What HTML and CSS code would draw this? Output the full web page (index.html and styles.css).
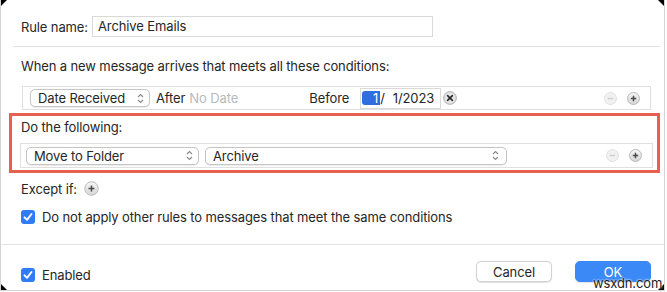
FILE: index.html
```html
<!DOCTYPE html>
<html lang="en">
<head>
    <meta charset="UTF-8">
    <title>Rule - Archive Emails</title>
    <link rel="stylesheet" href="styles.css">
</head>
<body>
    <div class="window">
        <!-- rule name -->
        <div class="name-row">
            <span class="label">Rule name:</span>
            <div class="text-field">Archive Emails</div>
        </div>
        <div class="sep"></div>

        <!-- conditions -->
        <p class="section-title">When a new message arrives that meets all these conditions:</p>
        <div class="rule-box cond-box">
            <div class="popup popup-date">
                <span>Date Received</span>
                <svg class="arrows" width="7" height="11" viewBox="0 0 7 11"><path d="M1 4 L3.5 1.5 L6 4 M1 7 L3.5 9.5 L6 7" fill="none" stroke="#8a8a8a" stroke-width="1.1"/></svg>
            </div>
            <span class="word">After</span>
            <span class="placeholder">No Date</span>
            <span class="before">Before</span>
            <div class="date-field"><span class="date-sel">1</span><span class="slash">/</span><span class="date-rest">1/2023</span></div>
            <span class="clear-btn">
                <svg width="14" height="14" viewBox="0 0 14 14"><circle cx="7" cy="7" r="6.3" fill="#e6e6e6" stroke="#a0a0a0" stroke-width="0.9"/><path d="M4.6 4.6 L9.4 9.4 M9.4 4.6 L4.6 9.4" stroke="#2b2b2b" stroke-width="1.6" stroke-linecap="round"/></svg>
            </span>
            <div class="row-btns">
                <svg width="13" height="13" viewBox="0 0 13 13"><circle cx="6.5" cy="6.5" r="6" fill="#f1f1f1" stroke="#dcdcdc" stroke-width="0.8"/><path d="M3.8 6.5 H9.2" stroke="#cfcfcf" stroke-width="1.4"/></svg>
                <svg width="13" height="13" viewBox="0 0 13 13"><defs><linearGradient id="g1" x1="0" y1="0" x2="0" y2="1"><stop offset="0" stop-color="#f6f6f6"/><stop offset="1" stop-color="#d6d6d6"/></linearGradient></defs><circle cx="6.5" cy="6.5" r="6" fill="url(#g1)" stroke="#ababab" stroke-width="0.8"/><path d="M3.8 6.5 H9.2 M6.5 3.8 V9.2" stroke="#4a4a4a" stroke-width="1.5"/></svg>
            </div>
        </div>

        <!-- actions -->
        <div class="action-frame">
            <p class="section-title">Do the following:</p>
            <div class="rule-box act-box">
                <div class="popup popup-action">
                    <span>Move to Folder</span>
                    <svg class="arrows" width="7" height="11" viewBox="0 0 7 11"><path d="M1 4 L3.5 1.5 L6 4 M1 7 L3.5 9.5 L6 7" fill="none" stroke="#8a8a8a" stroke-width="1.1"/></svg>
                </div>
                <div class="popup popup-folder">
                    <span>Archive</span>
                    <svg class="arrows" width="7" height="11" viewBox="0 0 7 11"><path d="M1 4 L3.5 1.5 L6 4 M1 7 L3.5 9.5 L6 7" fill="none" stroke="#8a8a8a" stroke-width="1.1"/></svg>
                </div>
                <div class="row-btns">
                    <svg width="13" height="13" viewBox="0 0 13 13"><circle cx="6.5" cy="6.5" r="6" fill="#f1f1f1" stroke="#dcdcdc" stroke-width="0.8"/><path d="M3.8 6.5 H9.2" stroke="#cfcfcf" stroke-width="1.4"/></svg>
                    <svg width="13" height="13" viewBox="0 0 13 13"><defs><linearGradient id="g2" x1="0" y1="0" x2="0" y2="1"><stop offset="0" stop-color="#f6f6f6"/><stop offset="1" stop-color="#d6d6d6"/></linearGradient></defs><circle cx="6.5" cy="6.5" r="6" fill="url(#g2)" stroke="#ababab" stroke-width="0.8"/><path d="M3.8 6.5 H9.2 M6.5 3.8 V9.2" stroke="#4a4a4a" stroke-width="1.5"/></svg>
                </div>
            </div>
        </div>

        <!-- exceptions -->
        <div class="except-row">
            <span>Except if:</span>
            <svg width="15" height="15" viewBox="0 0 15 15"><defs><linearGradient id="g3" x1="0" y1="0" x2="0" y2="1"><stop offset="0" stop-color="#f6f6f6"/><stop offset="1" stop-color="#d6d6d6"/></linearGradient></defs><circle cx="7.5" cy="7.5" r="6.8" fill="url(#g3)" stroke="#b0b0b0" stroke-width="0.8"/><path d="M4.5 7.5 H10.5 M7.5 4.5 V10.5" stroke="#4a4a4a" stroke-width="1.5"/></svg>
        </div>

        <div class="check-row stop-row">
            <span class="checkbox"><svg width="14" height="14" viewBox="0 0 14 14"><path d="M3.5 7.3 L6 9.8 L10.5 4" fill="none" stroke="#fff" stroke-width="1.9" stroke-linecap="round" stroke-linejoin="round"/></svg></span>
            <span>Do not apply other rules to messages that meet the same conditions</span>
        </div>

        <div class="sep full"></div>

        <div class="footer">
            <div class="check-row enabled-row">
                <span class="checkbox"><svg width="14" height="14" viewBox="0 0 14 14"><path d="M3.5 7.3 L6 9.8 L10.5 4" fill="none" stroke="#fff" stroke-width="1.9" stroke-linecap="round" stroke-linejoin="round"/></svg></span>
                <span>Enabled</span>
            </div>
            <div class="buttons">
                <button class="btn">Cancel</button>
                <button class="btn btn-ok">OK</button>
            </div>
        </div>

        <span class="corner c-tl"></span>
        <span class="corner c-tr"></span>
        <span class="corner c-bl"></span>
        <span class="corner c-br"></span>
        <span class="watermark">wsxdn.com</span>
    </div>
</body>
</html>
```

FILE: styles.css
```css
* {
    box-sizing: border-box;
}

body {
    margin: 0;
    background: #fff;
    font-family: Inter, "Liberation Sans", Arial, sans-serif;
    font-size: 13px;
    letter-spacing: -0.12px;
    color: #262626;
}

.window {
    position: relative;
    width: 665px;
    height: 291px;
    border-left: 1px solid #d4d4d4;
    border-right: 1px solid #d4d4d4;
    border-bottom: 1px solid #d4d4d4;
    overflow: hidden;
}

/* rule name */
.name-row {
    display: flex;
    align-items: center;
    height: 21px;
    margin-top: 16px;
    padding-left: 20px;
}
.label {
    width: 71px;
}
.text-field {
    width: 341px;
    height: 21px;
    border: 1px solid #d9d9d9;
    padding-left: 5px;
    line-height: 19px;
}

.sep {
    height: 1px;
    margin: 9px 4px 0 12px;
    background: #e2e2e2;
}
.sep.full {
    margin: 20px 0 0 0;
}

.section-title {
    margin: 11px 0 0 20px;
    line-height: 16px;
}

/* rule rows */
.rule-box {
    display: flex;
    align-items: center;
    border: 1px solid #e0e0e0;
    padding-right: 10px;
}
.cond-box {
    height: 24px;
    margin: 12px 13px 0 21px;
    padding-left: 7px;
}
.act-box {
    height: 25px;
    margin: 8px 4px 2px 8px;
    padding-left: 5px;
}

.popup {
    display: flex;
    align-items: center;
    justify-content: space-between;
    height: 18px;
    padding: 0 5px 0 7px;
    border: 1px solid #c6c6c6;
    border-radius: 5px;
    background: #fff;
    box-shadow: 0 0.5px 1px rgba(0, 0, 0, 0.08);
}
.popup-date {
    width: 120px;
}
.popup-action {
    width: 173px;
}
.popup-folder {
    width: 302px;
    margin-left: 6px;
    padding-right: 7px;
}

.word {
    margin-left: 6px;
}
.placeholder {
    width: 120px;
    margin-left: 4px;
    color: #b9b9b9;
}

.date-field {
    display: flex;
    align-items: center;
    width: 81px;
    height: 21px;
    margin-left: 11px;
    border: 1px solid #dadada;
    padding-left: 1px;
}
.date-sel {
    width: 18px;
    height: 14px;
    line-height: 14px;
    padding-right: 2px;
    text-align: right;
    color: #fff;
    background: #2f6de1;
    border-radius: 3px 0 0 3px;
}
.slash {
    margin-right: 8px;
}

.clear-btn {
    display: flex;
    margin-left: 2px;
}

.row-btns {
    display: flex;
    gap: 10px;
    margin-left: auto;
}

/* action frame */
.action-frame {
    margin: 3px 4px 0 8px;
    border: 3px solid #e8604f;
    padding-top: 3px;
}
.action-frame .section-title {
    margin: 0 0 0 9px;
}

.except-row {
    display: flex;
    align-items: center;
    gap: 7px;
    height: 15px;
    margin: 8px 0 0 20px;
}

.check-row {
    display: flex;
    align-items: center;
    gap: 7px;
    height: 14px;
    padding-left: 20px;
}
.stop-row {
    margin-top: 14px;
}
.checkbox {
    display: flex;
    width: 14px;
    height: 14px;
    border-radius: 3px;
    background: #2f7cf6;
}

/* footer */
.footer {
    display: flex;
    align-items: flex-start;
    justify-content: space-between;
    padding: 16px 13px 0 0;
}
.enabled-row {
    margin-top: 6px;
    height: 15px;
}
.buttons {
    display: flex;
    gap: 23px;
}
.btn {
    width: 76px;
    height: 21px;
    border: 1px solid #d2d2d2;
    border-radius: 5px;
    background: #fff;
    box-shadow: 0 0.5px 1px rgba(0, 0, 0, 0.12);
    font-family: inherit;
    font-size: 13px;
    letter-spacing: inherit;
    color: #262626;
    padding: 0;
}
.btn-ok {
    border-color: #3a87f6;
    background: #3b89f7;
    color: #fff;
}

/* screenshot corner marks and watermark */
.corner {
    position: absolute;
    width: 0;
    height: 0;
    border: 3px solid transparent;
}
.c-tl {
    top: 0;
    left: 0;
    border-top-color: #000;
    border-left-color: #000;
}
.c-tr {
    top: 0;
    right: 0;
    border-top-color: #000;
    border-right-color: #000;
}
.c-bl {
    bottom: 0;
    left: 0;
    border-bottom-color: #000;
    border-left-color: #000;
}
.c-br {
    bottom: 0;
    right: 0;
    border-bottom-color: #000;
    border-right-color: #000;
}

.watermark {
    position: absolute;
    left: 592px;
    top: 275px;
    font-size: 13px;
    color: #222;
    text-shadow: 0 0 2px #fff, 0 0 2px #fff;
}
```
